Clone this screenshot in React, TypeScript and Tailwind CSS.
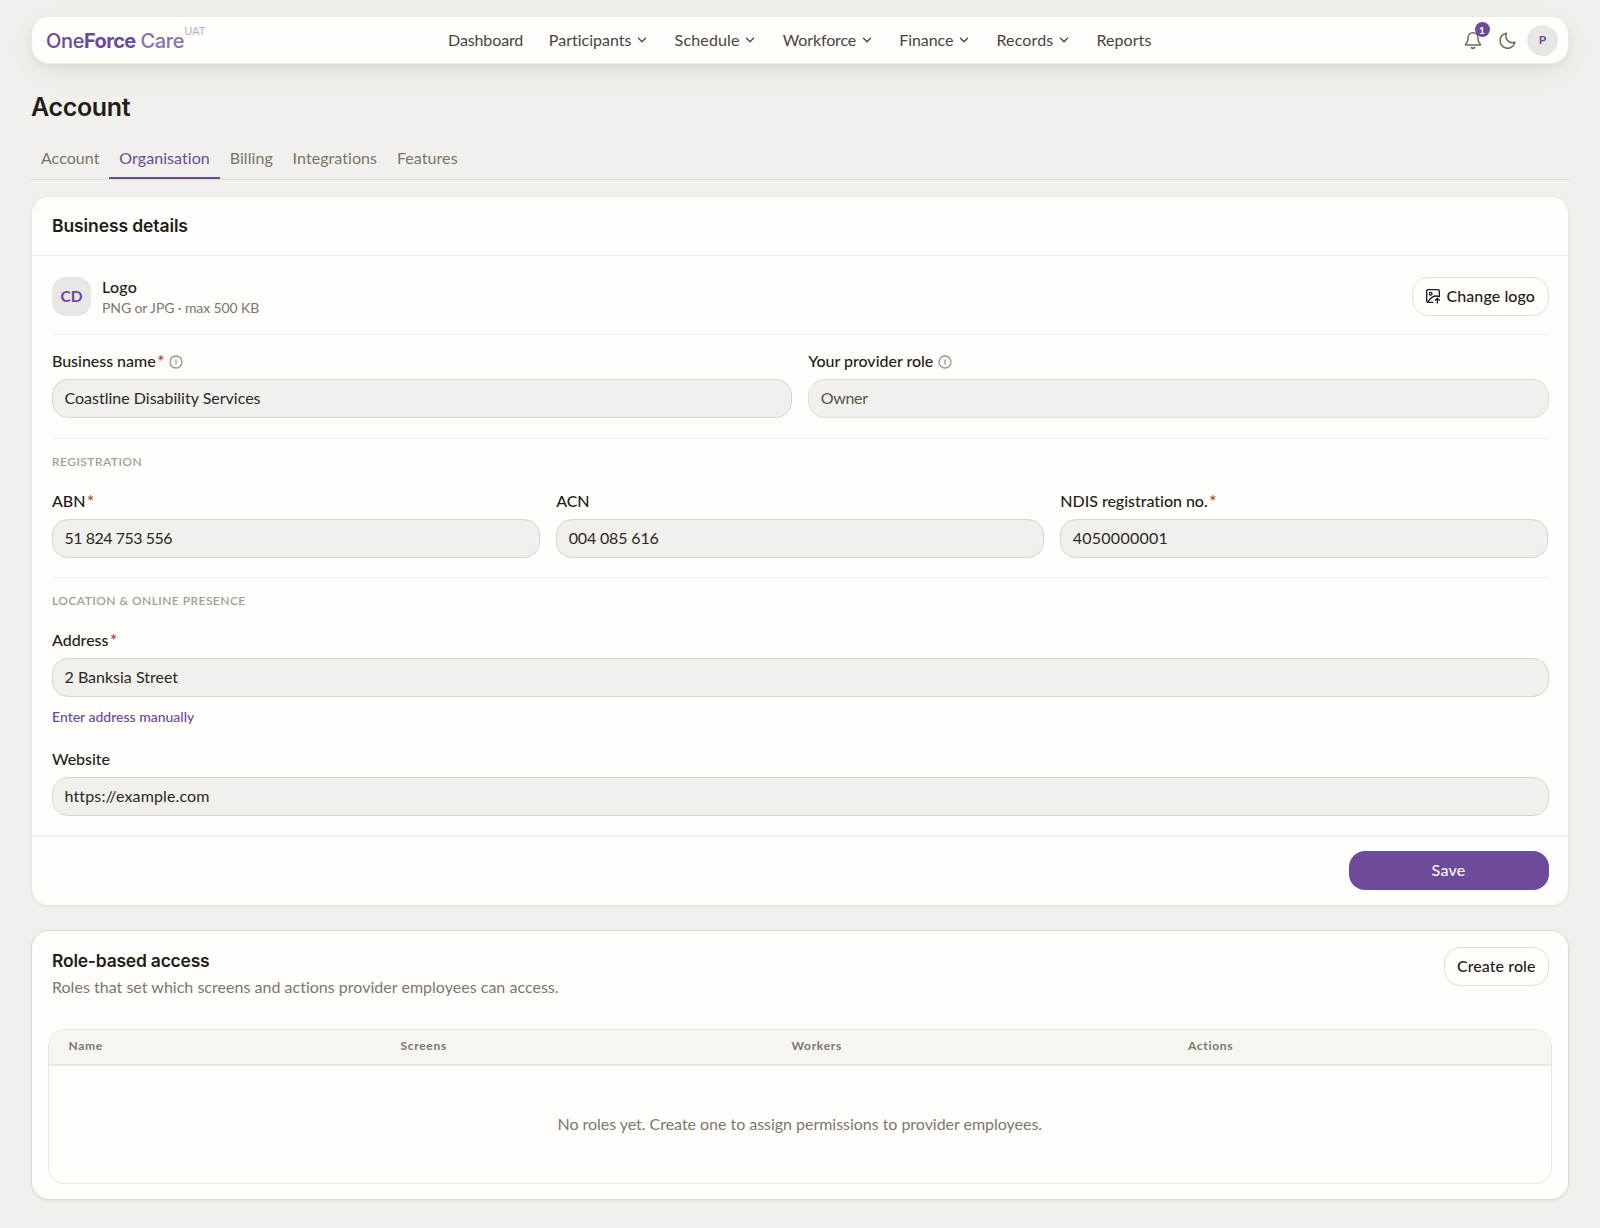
import React from 'react';
import { ChevronDown } from 'lucide-react';

function Bell() {
  return (
    <svg width="20" height="20" viewBox="0 0 24 24" fill="none" stroke="currentColor" strokeWidth="1.8" strokeLinecap="round" strokeLinejoin="round">
      <path d="M12 3.2c-3.6 0-6 2.8-6 6.3 0 2.700-.4 4.400-1.300 5.700-.5.700-1.200 1.300-1.600 2-.2.400 0 .8.500.8h16.800c.5 0 .7-.4.500-.8-.4-.7-1.100-1.300-1.600-2-.9-1.300-1.300-3-1.300-5.700 0-3.500-2.400-6.300-6-6.300Z" />
      <path d="M10 21.200c.6.500 1.200.8 2 .8s1.400-.3 2-.8" />
    </svg>
  );
}

function Moon() {
  return (
    <svg width="19" height="19" viewBox="0 0 24 24" fill="none" stroke="currentColor" strokeWidth="1.9" strokeLinecap="round" strokeLinejoin="round">
      <path d="M21.300 14.300c-1 .4-2 .6-3.100.6-4.700 0-8.300-3.800-8.300-8.500 0-1.300.3-2.500.8-3.600A9.500 9.500 0 1 0 21.300 14.300Z" />
    </svg>
  );
}

function ImageUp() {
  return (
    <svg width="16" height="16" viewBox="0 0 24 24" fill="none" stroke="currentColor" strokeWidth="2" strokeLinecap="round" strokeLinejoin="round">
      <path d="M12 21.500H4.500a2 2 0 0 1-2-2v-15a2 2 0 0 1 2-2h15a2 2 0 0 1 2 2V12" />
      <circle cx="8.500" cy="8.500" r="2" />
      <path d="M4 21c4-5.500 8.500-11.500 17.500-8" />
      <path d="M18.500 22.500V16m-3 2.500 3-3 3 3" />
    </svg>
  );
}

function Info() {
  return (
    <svg width="14" height="14" viewBox="0 0 14 14" fill="none" stroke="#9a958a" strokeWidth="1.300" strokeLinecap="round">
      <circle cx="7" cy="7" r="6" />
      <path d="M7 5v4" />
    </svg>
  );
}

const nav = [
  { label: 'Dashboard', menu: false, track: 'tracking-[-0.12px]' },
  { label: 'Participants', menu: true, track: 'tracking-[0.01px]' },
  { label: 'Schedule', menu: true, track: 'tracking-[0.16px]' },
  { label: 'Workforce', menu: true, track: 'tracking-[-0.12px]' },
  { label: 'Finance', menu: true, track: 'tracking-[-0.09px]' },
  { label: 'Records', menu: true, track: 'tracking-[0.15px]' },
  { label: 'Reports', menu: false, track: 'tracking-[0.07px]' },
];

const tabs = ['Account', 'Organisation', 'Billing', 'Integrations', 'Features'];

type FieldProps = { label: string; value: string; required?: boolean; info?: boolean; muted?: boolean; track?: string };

function Field({ label, value, required, info, muted, track = '' }: FieldProps) {
  return (
    <div>
      <div className="flex h-6 items-center">
        <span className="pb-0.5 font-medium tracking-[-0.03px] text-[#1f1d19]">{label}</span>
        {required && <span className="ml-[1.500px] text-[17px] font-medium text-[#b83a2e]">*</span>}
        {info && <span className="ml-[5px]"><Info /></span>}
      </div>
      <div className={`mt-[5px] flex h-[39px] items-center rounded-[16px] border bg-[#f1f0ec] px-[11.500px] pb-0.5 ${track} ${muted ? 'border-[#e0dfda] text-[#57534a]' : 'border-[#d6d5d0] text-[#2a2823]'}`}>{value}</div>
    </div>
  );
}

function SectionTitle({ children }: { children: string }) {
  return <div className="h-4 text-[12px] leading-4 font-semibold tracking-[0.45px] text-[#a39e93]">{children}</div>;
}

export default function App() {
  return (
    <div className="min-h-[1228px] bg-[#f1f0ec] pt-4 pr-[31.500px] pl-[31px] font-['Lato',sans-serif] text-[16px] leading-6 text-[#1f1d19] [font-variant-ligatures:none]">
      <header className="grid h-12 grid-cols-[1fr_auto_1fr] items-center rounded-[18px] border border-[#ebeae5] bg-[#fffefa] pr-[9.500px] pl-3.5 shadow-[0_8px_24px_-4px_rgba(80,75,50,0.13),0_2px_5px_rgba(80,75,50,0.06)]">
        <div className="flex items-start text-[#6b4a9c]">
          <div className="flex pt-px font-['Inter',sans-serif] text-[20px] leading-6">
            <span className="font-medium tracking-[-0.35px]">One</span>
            <span className="font-bold tracking-[-0.65px]">Force</span>
            <span className="ml-[5px] font-medium tracking-[-0.4px] text-[#8b70b3]">Care</span>
          </div>
          <span className="-mt-[5px] text-[11px] leading-4 text-[#b9aace]">UAT</span>
        </div>
        <nav className="flex items-center gap-[25.600px] pr-[4.500px] text-[#47443d]">
          {nav.map((n) => (
            <span key={n.label} className="flex items-center gap-[3.500px]">
              <span className={n.track}>{n.label}</span>
              {n.menu && <ChevronDown size={14} strokeWidth={2.2} />}
            </span>
          ))}
        </nav>
        <div className="flex items-center justify-end text-[#6b675d]">
          <div className="relative mr-[15px]">
            <Bell />
            <span className="absolute -top-2 left-[11.500px] flex size-[15px] items-center justify-center rounded-full bg-[#6b4a9c] text-[10px] leading-none font-bold text-white">1</span>
          </div>
          <Moon />
          <div className="ml-[10px] flex size-[31px] items-center justify-center rounded-full bg-[#e9e7e3] pb-px text-[12px] font-bold text-[#6b4a9c]">P</div>
        </div>
      </header>

      <h1 className="mt-[27px] h-8 font-['Inter',sans-serif] text-[25px] leading-8 font-semibold tracking-[-0.35px]">Account</h1>

      <div className="mt-[17px] flex h-10 border-b border-[#dfded9] tracking-[0.07px] text-[#7a7468]">
        {tabs.map((t) => (
          <div key={t} className={t === 'Organisation' ? 'h-[39px] border-b-2 border-[#6b4a9c] px-[9.900px] pt-[6px] text-[#6b4a9c]' : 'h-[39px] px-[9.900px] pt-[6px]'}>
            {t}
          </div>
        ))}
      </div>

      <section className="mt-4 h-[710px] rounded-[18px] border border-[#eae9e4] bg-[#fffefa] shadow-[0_1px_3px_rgba(60,55,40,0.08)]">
        <h2 className="flex h-[59px] items-center border-b border-[#eeede9] px-5 font-['Inter',sans-serif] text-[17.500px] font-semibold tracking-[-0.1px]">Business details</h2>
        <div className="pr-[19px] pl-5">
          <div className="flex h-[79px] items-center justify-between border-b border-[#efeeea] pt-0.5">
            <div className="flex items-center">
              <div className="flex size-[39px] items-center justify-center rounded-[14px] bg-[#e9e7e3] pb-px text-[15.500px] font-bold text-[#6b4a9c]">CD</div>
              <div className="ml-[11px]">
                <div className="h-[22px] font-medium leading-[23px] tracking-[0.23px]">Logo</div>
                <div className="h-5 text-[14px] leading-[22px] tracking-[-0.1px] text-[#7c776c]">PNG or JPG · max 500 KB</div>
              </div>
            </div>
            <button className="flex h-[39px] w-[137px] items-center justify-center gap-[5.500px] rounded-[16px] border border-[#dfded9] pb-px font-medium tracking-[0.1px]">
              <span className="mt-px"><ImageUp /></span>
              Change logo
            </button>
          </div>
          <div className="grid grid-cols-2 gap-4 border-b border-[#efeeea] pt-[15px] pb-5">
            <Field label="Business name" value="Coastline Disability Services" required info />
            <Field label="Your provider role" value="Owner" info muted track="tracking-[-0.32px]" />
          </div>
          <div className="border-b border-[#efeeea] pt-[15px] pb-[19px]">
            <SectionTitle>REGISTRATION</SectionTitle>
            <div className="mt-5 grid grid-cols-3 gap-4">
              <Field label="ABN" value="51 824 753 556" required track="tracking-[-0.49px]" />
              <Field label="ACN" value="004 085 616" track="tracking-[-0.15px]" />
              <Field label="NDIS registration no." value="4050000001" required track="tracking-[0.23px]" />
            </div>
          </div>
          <div className="pt-[15px] pb-[19px]">
            <SectionTitle>LOCATION &amp; ONLINE PRESENCE</SectionTitle>
            <div className="mt-5">
              <Field label="Address" value="2 Banksia Street" required />
            </div>
            <div className="mt-[9px] h-5 text-[14px] leading-[21px] font-medium text-[#6b4a9c]">Enter address manually</div>
            <div className="mt-[22px]">
              <Field label="Website" value="https://example.com" track="tracking-[0.14px]" />
            </div>
          </div>
        </div>
        <div className="flex justify-end border-t border-[#eeede9] pt-[15px] pr-[19px]">
          <button className="h-[39px] w-[200px] rounded-[16px] bg-[#6e4a9a] pb-0.5 font-medium tracking-[0.2px] text-[#fbf9fd]">Save</button>
        </div>
      </section>

      <section className="mt-6 h-[270px] rounded-[18px] border border-[#dcdbd6] bg-[#fffefa] px-[15.500px] shadow-[0_1px_3px_rgba(60,55,40,0.08)]">
        <div className="flex h-[98px] justify-between pt-4 pr-[3.500px] pl-[4.500px]">
          <div>
            <h2 className="h-7 font-['Inter',sans-serif] text-[17.500px] leading-[27px] font-semibold tracking-[-0.23px]">Role-based access</h2>
            <p className="tracking-[0.02px] text-[#7c776c]">Roles that set which screens and actions provider employees can access.</p>
          </div>
          <button className="h-[39px] w-[104.500px] rounded-[16px] border border-[#dfded9] pb-0.5 font-medium tracking-[0.07px]">Create role</button>
        </div>
        <div className="h-[155px] overflow-hidden rounded-[16px] border border-[#e8e7e2] text-[#7c776c]">
          <div className="grid h-9 grid-cols-[332px_391px_396.500px_1fr] items-center border-b-2 border-[#e8e7e2] bg-[#f6f5f0] pb-0.5 pl-[20px] text-[12px] font-bold tracking-[0.7px]">
            <span>Name</span>
            <span>Screens</span>
            <span>Workers</span>
            <span>Actions</span>
          </div>
          <div className="flex h-[117px] items-center justify-center pb-0.5 tracking-[-0.03px]">No roles yet. Create one to assign permissions to provider employees.</div>
        </div>
      </section>
    </div>
  );
}
